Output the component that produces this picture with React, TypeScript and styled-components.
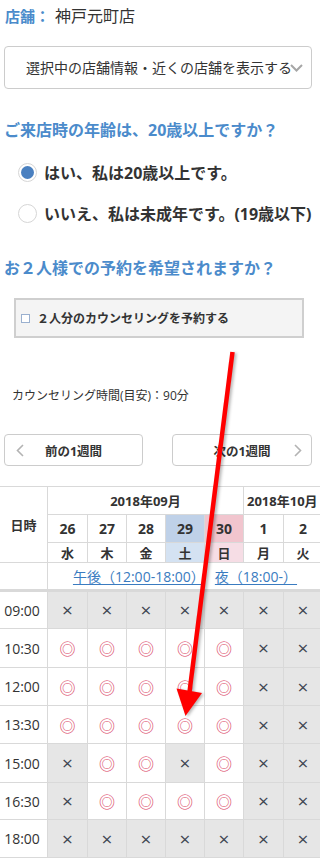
import React from 'react';
import styled, { createGlobalStyle } from 'styled-components';

const GlobalStyle = createGlobalStyle`
  html, body { margin: 0; padding: 0; background: #fff; overflow: hidden; }
  body {
    font-family: "Open Sans", "Noto Sans CJK JP", sans-serif;
    color: #333;
  }
`;

const BLUE = '#4b8bcb';
const LINE = '#d9d9d9';

const Page = styled.div`
  position: relative;
  width: 320px;
  height: 863px;
  overflow: hidden;
`;

const Inner = styled.div`
  display: flex;
  flex-direction: column;
  padding: 4px 8px 0 4px;
`;

const StoreLine = styled.div`
  height: 22px;
  display: flex;
  align-items: center;
  gap: 5px;
  padding-left: 1px;
  white-space: nowrap;
`;

const StoreLabel = styled.span`
  color: ${BLUE};
  font-weight: 700;
  font-size: 15px;
`;

const StoreName = styled.span`
  font-size: 16px;
  color: #333;
`;

const SelectBox = styled.div`
  margin-top: 20px;
  height: 43px;
  box-sizing: border-box;
  border: 1px solid #ccc;
  border-radius: 4px;
  display: flex;
  align-items: center;
  padding-left: 21px;
  font-size: 14px;
  line-height: 20px;
  white-space: nowrap;
  overflow: hidden;
  color: #333;
`;

const Chevron = styled.svg`
  flex: none;
  margin-left: -2px;
`;

const Heading = styled.h2<{ $top: number }>`
  margin: ${(p) => p.$top}px 0 0 0;
  font-size: 16px;
  line-height: 24px;
  font-weight: 700;
  color: ${BLUE};
  white-space: nowrap;
`;

const RadioRow = styled.label<{ $top: number }>`
  margin-top: ${(p) => p.$top}px;
  margin-left: 14px;
  height: 24px;
  display: flex;
  align-items: center;
  gap: 7px;
  font-size: 16px;
  font-weight: 700;
  color: #333;
  white-space: nowrap;
`;

const RadioCircle = styled.span<{ $checked?: boolean }>`
  flex: none;
  width: 19px;
  height: 19px;
  box-sizing: border-box;
  border-radius: 50%;
  border: 1px solid #d6d6d6;
  background: #fff;
  display: flex;
  align-items: center;
  justify-content: center;
  &::after {
    content: '';
    width: 13px;
    height: 13px;
    border-radius: 50%;
    background: ${(p) => (p.$checked ? '#4a80c0' : 'transparent')};
  }
`;

const CheckArea = styled.div`
  margin-top: 18px;
  margin-left: 10px;
  width: 290px;
  height: 40px;
  box-sizing: border-box;
  border: 2px solid #cfcfcf;
  background: #f4f4f4;
  display: flex;
  align-items: center;
  padding-left: 5px;
  gap: 7px;
  font-size: 12px;
  font-weight: 700;
  color: #333;
  white-space: nowrap;
`;

const CheckSquare = styled.span`
  flex: none;
  width: 9px;
  height: 9px;
  box-sizing: border-box;
  border: 1px solid #9ab0cf;
  background: #fff;
`;

const Duration = styled.p`
  margin: 48px 0 0 8px;
  font-size: 12px;
  line-height: 20px;
  color: #333;
  white-space: nowrap;
`;

const NavRow = styled.div`
  margin-top: 28px;
  display: flex;
  justify-content: space-between;
`;

const NavButton = styled.div<{ $w: number }>`
  width: ${(p) => p.$w}px;
  height: 32px;
  box-sizing: border-box;
  border: 1px solid #ccc;
  border-radius: 4px;
  background: #fff;
  display: grid;
  grid-template-columns: 1fr auto 1fr;
  align-items: center;
  font-size: 12.5px;
  font-weight: 700;
  color: #333;
  white-space: nowrap;
`;

const NavIcon = styled.svg<{ $side: 'left' | 'right' }>`
  justify-self: ${(p) => (p.$side === 'left' ? 'start' : 'end')};
  margin: ${(p) => (p.$side === 'left' ? '0 0 0 11px' : '0 9px 0 0')};
`;

const Schedule = styled.div`
  margin-top: 20px;
  width: 322px;
  display: grid;
  grid-template-columns: 47px 39px 38px 38px 38px 38px 39px 38px;
  grid-template-rows: 27px 27px 19px 28px 36px 38px 37px 37px 38px 36px 37px;
  gap: 1px;
  background: ${LINE};
  border-top: 1px solid ${LINE};
  border-bottom: 1px solid ${LINE};
`;

const Cell = styled.div<{ $bg?: string }>`
  background: ${(p) => p.$bg || '#fff'};
  display: flex;
  align-items: center;
  justify-content: center;
  white-space: nowrap;
  overflow: hidden;
`;

const CornerCell = styled(Cell)`
  grid-row: 1 / 4;
  font-size: 13px;
  font-weight: 700;
`;

const MonthCell = styled(Cell)<{ $span: number }>`
  grid-column: span ${(p) => p.$span};
  font-size: 13px;
  font-weight: 700;
  justify-content: ${(p) => (p.$span > 2 ? 'center' : 'flex-start')};
  padding-left: ${(p) => (p.$span > 2 ? 0 : 3)}px;
`;

const DateCell = styled(Cell)`
  font-size: 14px;
  font-weight: 700;
`;

const WeekCell = styled(Cell)`
  font-size: 13px;
  font-weight: 700;
`;

const PeriodBlank = styled(Cell)`
  margin-bottom: 2px;
`;

const PeriodCell = styled(Cell)`
  grid-column: 2 / 9;
  margin-bottom: 2px;
  gap: 10px;
  font-size: 14px;
`;

const PeriodLink = styled.a`
  color: #3a7bc0;
  text-decoration: underline;
  text-underline-offset: 2px;
`;

const TimeCell = styled(Cell)`
  font-size: 14px;
  color: #333;
  padding-right: 3px;
`;

const SlotCell = styled(Cell)<{ $open: boolean }>`
  background: ${(p) => (p.$open ? '#fff' : '#e6e6e6')};
  font-size: ${(p) => (p.$open ? '16px' : '19px')};
  color: ${(p) => (p.$open ? '#d93d5e' : '#3f4652')};
  font-family: ${(p) => (p.$open ? '"Noto Sans CJK JP", sans-serif' : '"Open Sans", sans-serif')};
`;

const ArrowLayer = styled.svg`
  position: absolute;
  left: 0;
  top: 0;
  pointer-events: none;
  filter: drop-shadow(2px 1px 1.5px rgba(0, 0, 0, 0.28));
`;

const days = [
  { d: '26', w: '水', dBg: '', wBg: '' },
  { d: '27', w: '木', dBg: '', wBg: '' },
  { d: '28', w: '金', dBg: '', wBg: '' },
  { d: '29', w: '土', dBg: '#bfd1e8', wBg: '#d4e2f2' },
  { d: '30', w: '日', dBg: '#f1c5ce', wBg: '#f6dde5' },
  { d: '1', w: '月', dBg: '', wBg: '' },
  { d: '2', w: '火', dBg: '', wBg: '' },
];

const slots = [
  { t: '09:00', s: 'xxxxxxx' },
  { t: '10:30', s: 'oooooxx' },
  { t: '12:00', s: 'oooooxx' },
  { t: '13:30', s: 'oooooxx' },
  { t: '15:00', s: 'xooxoxx' },
  { t: '16:30', s: 'xooooxx' },
  { t: '18:00', s: 'xxxxxxx' },
];

export default function App() {
  return (
    <Page>
      <GlobalStyle />
      <Inner>
        <StoreLine>
          <StoreLabel>店舗：</StoreLabel>
          <StoreName>神戸元町店</StoreName>
        </StoreLine>
        <SelectBox>
          <span>選択中の店舗情報・近くの店舗を表示する</span>
          <Chevron width="13" height="8" viewBox="0 0 13 8">
            <polyline points="1,1 6.5,6.5 12,1" fill="none" stroke="#a6a6a6" strokeWidth="2" />
          </Chevron>
        </SelectBox>
        <Heading $top={29}>ご来店時の年齢は、20歳以上ですか？</Heading>
        <RadioRow $top={18}>
          <RadioCircle $checked />
          はい、私は20歳以上です。
        </RadioRow>
        <RadioRow $top={17}>
          <RadioCircle />
          いいえ、私は未成年です。(19歳以下)
        </RadioRow>
        <Heading $top={31}>お２人様での予約を希望されますか？</Heading>
        <CheckArea>
          <CheckSquare />
          ２人分のカウンセリングを予約する
        </CheckArea>
        <Duration>カウンセリング時間(目安)：90分</Duration>
        <NavRow>
          <NavButton $w={139}>
            <NavIcon $side="left" width="8" height="13" viewBox="0 0 8 13">
              <polyline points="7,1 1.5,6.5 7,12" fill="none" stroke="#b3b3b3" strokeWidth="1.6" />
            </NavIcon>
            <span>前の1週間</span>
            <span />
          </NavButton>
          <NavButton $w={140}>
            <span />
            <span>次の1週間</span>
            <NavIcon $side="right" width="8" height="13" viewBox="0 0 8 13">
              <polyline points="1,1 6.5,6.5 1,12" fill="none" stroke="#b3b3b3" strokeWidth="1.6" />
            </NavIcon>
          </NavButton>
        </NavRow>
      </Inner>
      <Schedule>
        <CornerCell>日時</CornerCell>
        <MonthCell $span={5}>2018年09月</MonthCell>
        <MonthCell $span={2}>2018年10月</MonthCell>
        {days.map((x) => (
          <DateCell key={'d' + x.d} $bg={x.dBg}>
            {x.d}
          </DateCell>
        ))}
        {days.map((x) => (
          <WeekCell key={'w' + x.d} $bg={x.wBg}>
            {x.w}
          </WeekCell>
        ))}
        <PeriodBlank />
        <PeriodCell>
          <PeriodLink>午後（12:00-18:00）</PeriodLink>
          <PeriodLink>夜（18:00-）</PeriodLink>
        </PeriodCell>
        {slots.map((r) => (
          <React.Fragment key={r.t}>
            <TimeCell>{r.t}</TimeCell>
            {r.s.split('').map((c, i) => (
              <SlotCell key={i} $open={c === 'o'}>
                {c === 'o' ? '◎' : '×'}
              </SlotCell>
            ))}
          </React.Fragment>
        ))}
      </Schedule>
      <ArrowLayer width="320" height="863" viewBox="0 0 320 863">
        <line x1="232.5" y1="352" x2="189.5" y2="692" stroke="#ff0000" strokeWidth="4.5" />
        <polygon points="176.5,688.5 202,693 185.5,716" fill="#ff0000" />
      </ArrowLayer>
    </Page>
  );
}
